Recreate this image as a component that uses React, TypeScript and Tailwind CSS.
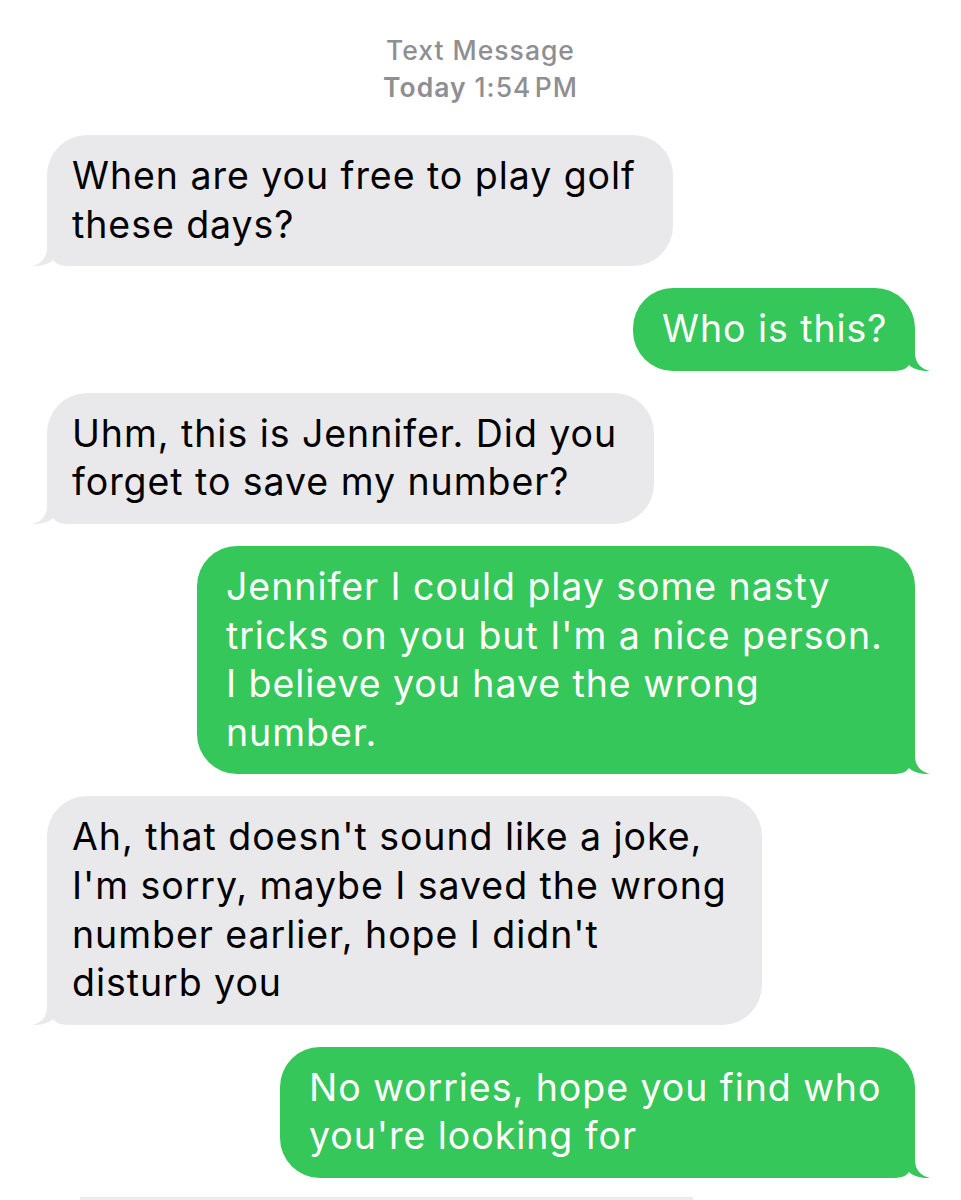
import React from "react";

const GREY = "#e9e9eb";
const GREEN = "#35c759";

function Tail({ color, side }: { color: string; side: "left" | "right" }) {
  const d =
    "M16 0 L16 22 C16 32 10 38 1 40 C10 40.5 18 38 22 34 C25 38.5 30 40 40 40 L56 40 L56 0 Z";
  return (
    <svg
      width="56"
      height="40"
      viewBox="0 0 56 40"
      className={
        side === "left"
          ? "absolute bottom-0 left-[-16px]"
          : "absolute bottom-0 right-[-16px] -scale-x-100"
      }
    >
      <path d={d} fill={color} />
    </svg>
  );
}

function Received({ lines, width }: { lines: string[]; width: number }) {
  return (
    <div className="flex justify-start pl-[47px]">
      <div
        className="relative rounded-[40px] bg-[#e9e9eb] py-[17px] pl-[25px] text-black"
        style={{ width }}
      >
        <Tail color={GREY} side="left" />
        <div className="relative text-[37.5px] leading-[48.6px] tracking-[0.95px] whitespace-nowrap">
          {lines.map((l, i) => (
            <div key={i}>{l}</div>
          ))}
        </div>
      </div>
    </div>
  );
}

function Sent({ lines, width }: { lines: string[]; width: number }) {
  return (
    <div className="flex justify-end pr-[46px]">
      <div
        className="relative rounded-[40px] bg-[#35c759] py-[17px] pl-[29px] text-white"
        style={{ width }}
      >
        <Tail color={GREEN} side="right" />
        <div className="relative text-[37.5px] leading-[48.6px] tracking-[0.95px] whitespace-nowrap">
          {lines.map((l, i) => (
            <div key={i}>{l}</div>
          ))}
        </div>
      </div>
    </div>
  );
}

export default function App() {
  return (
    <div
      className="h-[1200px] w-[961px] overflow-hidden bg-white"
      style={{ fontFamily: "Inter, 'Noto Sans', sans-serif" }}
    >
      <div className="pt-[32px] text-center text-[26.5px] leading-[37px] tracking-[1px] text-[#8e8e93] font-medium">
        <div>Text Message</div>
        <div>
          <span className="font-semibold">Today</span> 1:54&#8202;PM
        </div>
      </div>
      <div className="mt-[29px] flex flex-col gap-[22px]">
        <Received
          width={626}
          lines={["When are you free to play golf", "these days?"]}
        />
        <Sent width={282} lines={["Who is this?"]} />
        <Received
          width={607}
          lines={["Uhm, this is Jennifer. Did you", "forget to save my number?"]}
        />
        <Sent
          width={718}
          lines={[
            "Jennifer I could play some nasty",
            "tricks on you but I'm a nice person.",
            "I believe you have the wrong",
            "number.",
          ]}
        />
        <Received
          width={715}
          lines={[
            "Ah, that doesn't sound like a joke,",
            "I'm sorry, maybe I saved the wrong",
            "number earlier, hope I didn't",
            "disturb you",
          ]}
        />
        <Sent
          width={635}
          lines={["No worries, hope you find who", "you're looking for"]}
        />
      </div>
      <div className="mt-[19px] ml-[80px] h-[4px] w-[613px] bg-[#ececee]" />
    </div>
  );
}
